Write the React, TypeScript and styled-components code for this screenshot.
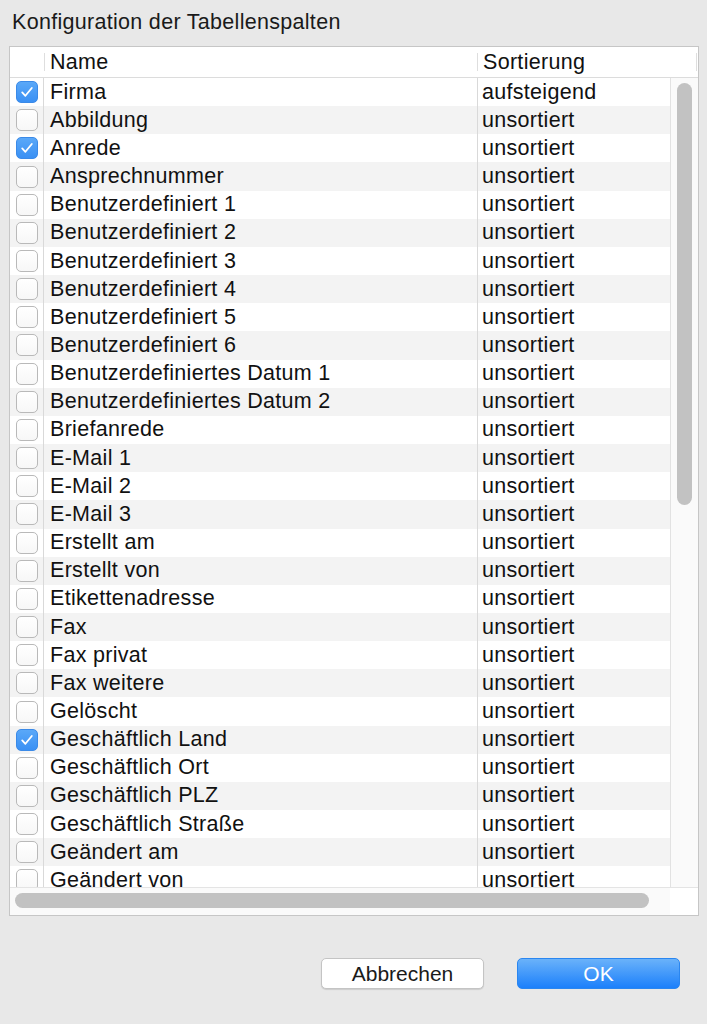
import React from "react";
import styled, { createGlobalStyle } from "styled-components";

const GlobalStyle = createGlobalStyle`
  html, body {
    margin: 0;
    padding: 0;
    background: #e8e8e8;
  }
  body {
    font-family: "Liberation Sans", Arial, sans-serif;
    color: #111;
  }
`;

type Column = {
  name: string;
  sort: string;
  visible: boolean;
};

const columns: Column[] = [
  { name: "Firma", sort: "aufsteigend", visible: true },
  { name: "Abbildung", sort: "unsortiert", visible: false },
  { name: "Anrede", sort: "unsortiert", visible: true },
  { name: "Ansprechnummer", sort: "unsortiert", visible: false },
  { name: "Benutzerdefiniert 1", sort: "unsortiert", visible: false },
  { name: "Benutzerdefiniert 2", sort: "unsortiert", visible: false },
  { name: "Benutzerdefiniert 3", sort: "unsortiert", visible: false },
  { name: "Benutzerdefiniert 4", sort: "unsortiert", visible: false },
  { name: "Benutzerdefiniert 5", sort: "unsortiert", visible: false },
  { name: "Benutzerdefiniert 6", sort: "unsortiert", visible: false },
  { name: "Benutzerdefiniertes Datum 1", sort: "unsortiert", visible: false },
  { name: "Benutzerdefiniertes Datum 2", sort: "unsortiert", visible: false },
  { name: "Briefanrede", sort: "unsortiert", visible: false },
  { name: "E-Mail 1", sort: "unsortiert", visible: false },
  { name: "E-Mail 2", sort: "unsortiert", visible: false },
  { name: "E-Mail 3", sort: "unsortiert", visible: false },
  { name: "Erstellt am", sort: "unsortiert", visible: false },
  { name: "Erstellt von", sort: "unsortiert", visible: false },
  { name: "Etikettenadresse", sort: "unsortiert", visible: false },
  { name: "Fax", sort: "unsortiert", visible: false },
  { name: "Fax privat", sort: "unsortiert", visible: false },
  { name: "Fax weitere", sort: "unsortiert", visible: false },
  { name: "Gelöscht", sort: "unsortiert", visible: false },
  { name: "Geschäftlich Land", sort: "unsortiert", visible: true },
  { name: "Geschäftlich Ort", sort: "unsortiert", visible: false },
  { name: "Geschäftlich PLZ", sort: "unsortiert", visible: false },
  { name: "Geschäftlich Straße", sort: "unsortiert", visible: false },
  { name: "Geändert am", sort: "unsortiert", visible: false },
  { name: "Geändert von", sort: "unsortiert", visible: false },
];

const Checkbox: React.FC<{ checked: boolean }> = ({ checked }) => (
  <CheckBox $checked={checked}>
    {checked && (
      <svg width="14" height="12" viewBox="0 0 14 12">
        <path
          d="M2.2 6.4 L5.4 9.8 L11.8 2"
          fill="none"
          stroke="#fff"
          strokeWidth="1.8"
          strokeLinecap="round"
          strokeLinejoin="round"
        />
      </svg>
    )}
  </CheckBox>
);

export default function App() {
  return (
    <>
      <GlobalStyle />
      <Dialog>
        <Title>Konfiguration der Tabellenspalten</Title>
        <Frame>
          <Header>
            <HeadCell $width={34} />
            <HeadSep />
            <HeadCell $width={432}>Name</HeadCell>
            <HeadSep />
            <HeadCell>Sortierung</HeadCell>
            <HeadSep />
            <HeadEnd />
          </Header>
          <Body>
            <Rows>
              {columns.map((c, i) => (
                <Row key={c.name} $odd={i % 2 === 1}>
                  <CheckCell>
                    <Checkbox checked={c.visible} />
                  </CheckCell>
                  <NameCell>{c.name}</NameCell>
                  <SortCell>{c.sort}</SortCell>
                </Row>
              ))}
            </Rows>
            <VScroll>
              <VThumb />
            </VScroll>
          </Body>
          <Footer>
            <HScroll>
              <HThumb />
            </HScroll>
            <Corner />
          </Footer>
        </Frame>
        <Buttons>
          <Button>Abbrechen</Button>
          <Button $primary>OK</Button>
        </Buttons>
      </Dialog>
    </>
  );
}

const Dialog = styled.div`
  width: 707px;
  height: 1024px;
  display: flex;
  flex-direction: column;
  box-sizing: border-box;
  padding: 10px 0 0 9px;
`;

const Title = styled.div`
  font-size: 21.5px;
  line-height: 24px;
  letter-spacing: 0.3px;
  padding-left: 3px;
  margin-bottom: 12px;
  color: #1a1a1a;
`;

const Frame = styled.div`
  width: 690px;
  height: 870px;
  box-sizing: border-box;
  border: 1px solid #c6c6c6;
  display: flex;
  flex-direction: column;
  background: #fff;
`;

const Header = styled.div`
  height: 30px;
  flex: none;
  display: flex;
  align-items: center;
  border-bottom: 1px solid #dcdcdc;
  background: #fff;
`;

const HeadCell = styled.div<{ $width?: number }>`
  ${(p) => (p.$width ? `width: ${p.$width}px; flex: none;` : "flex: 1;")}
  padding-left: 5px;
  box-sizing: border-box;
  font-size: 21.5px;
  letter-spacing: 0.3px;
  color: #111;
  white-space: nowrap;
`;

const HeadSep = styled.div`
  width: 1px;
  height: 18px;
  flex: none;
  background: #dedede;
`;

const HeadEnd = styled.div`
  width: 1px;
  flex: none;
`;

const Body = styled.div`
  height: 809px;
  flex: none;
  display: flex;
  border-bottom: 1px solid #e4e4e4;
`;

const Rows = styled.div`
  flex: 1;
  overflow: hidden;
`;

const Row = styled.div<{ $odd: boolean }>`
  height: 28.17px;
  display: flex;
  align-items: stretch;
  background: ${(p) => (p.$odd ? "#f3f3f3" : "#fff")};
`;

const CheckCell = styled.div`
  width: 34px;
  flex: none;
  box-sizing: border-box;
  border-right: 1px solid #d9d9d9;
  display: flex;
  align-items: center;
  justify-content: center;
`;

const CheckBox = styled.div<{ $checked: boolean }>`
  width: 22px;
  height: 22px;
  box-sizing: border-box;
  border-radius: 5px;
  display: flex;
  align-items: center;
  justify-content: center;
  ${(p) =>
    p.$checked
      ? `background: linear-gradient(#5aa8f8, #3a90f4);
         border: 1px solid #3b8ae8;`
      : `background: linear-gradient(#fff, #f7f7f7);
         border: 1px solid #b9b9b9;`}
`;

const NameCell = styled.div`
  width: 434px;
  flex: none;
  box-sizing: border-box;
  padding-left: 6px;
  border-right: 1px solid #d9d9d9;
  display: flex;
  align-items: center;
  font-size: 21.5px;
  letter-spacing: 0.3px;
  white-space: nowrap;
`;

const SortCell = styled.div`
  flex: 1;
  padding-left: 4px;
  display: flex;
  align-items: center;
  font-size: 21.5px;
  letter-spacing: 0.3px;
  white-space: nowrap;
`;

const VScroll = styled.div`
  width: 28px;
  flex: none;
  box-sizing: border-box;
  border-left: 1px solid #e2e2e2;
  background: #fafafa;
  padding: 5px 0 0 6px;
`;

const VThumb = styled.div`
  width: 15px;
  height: 422px;
  border-radius: 8px;
  background: #c2c2c2;
`;

const Footer = styled.div`
  flex: 1;
  display: flex;
`;

const HScroll = styled.div`
  flex: 1;
  background: #fafafa;
  padding: 5px 0 0 5px;
`;

const HThumb = styled.div`
  width: 634px;
  height: 15px;
  border-radius: 8px;
  background: #c2c2c2;
`;

const Corner = styled.div`
  width: 28px;
  flex: none;
  background: #fff;
`;

const Buttons = styled.div`
  margin-top: 42px;
  display: flex;
  justify-content: flex-end;
  gap: 33px;
  padding-right: 27px;
`;

const Button = styled.button<{ $primary?: boolean }>`
  width: 163px;
  height: 31px;
  border-radius: 5px;
  font-family: "Liberation Sans", Arial, sans-serif;
  font-size: 21px;
  padding: 0;
  ${(p) =>
    p.$primary
      ? `background: linear-gradient(#6ab2fa, #1c80fb);
         border: 1px solid #2a86f0;
         color: #fff;`
      : `background: #fff;
         border: 1px solid #c4c4c4;
         color: #1a1a1a;
         box-shadow: 0 1px 1px rgba(0, 0, 0, 0.12);`}
`;
